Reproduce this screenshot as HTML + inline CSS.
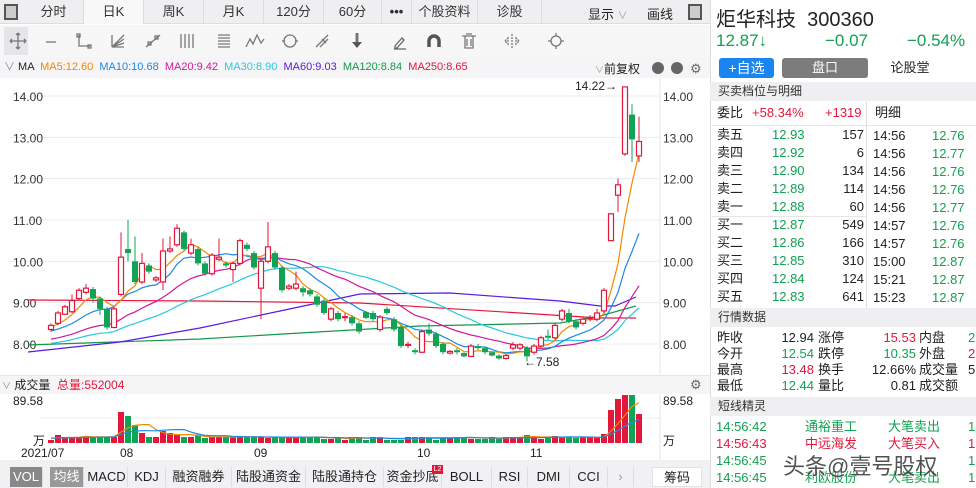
<!DOCTYPE html>
<html><head><meta charset="utf-8">
<style>
*{margin:0;padding:0;box-sizing:border-box}
body{width:976px;height:488px;overflow:hidden;background:#fff;font-family:"Liberation Sans","Noto Sans CJK SC",sans-serif;color:#222;position:relative}
.a{position:absolute;white-space:nowrap}
.g{color:#12a150}.r{color:#e3173a}
.tab{position:absolute;top:0;height:24px;line-height:24px;font-size:13px;text-align:center;color:#333;border-right:1px solid #dcdcdc}
.hdr{position:absolute;left:710px;width:266px;background:#efeff1;font-size:12px;color:#333;padding-left:8px}
.rw{position:absolute;font-size:13px;height:18px;line-height:18px}
.bt{position:absolute;top:467px;height:20px;line-height:20px;font-size:13px;text-align:center;color:#222;border-right:1px solid #ddd}
</style></head><body>
<div class="a" style="left:0;top:0;width:710px;height:24px;background:#efeff1;border-bottom:1px solid #ddd"></div>
<div class="a" style="left:4px;top:4px;width:14px;height:16px;border:2px solid #555;background:#ccc"></div>
<div class="tab" style="left:24px;width:60px">分时</div>
<div class="tab" style="left:84px;width:60px;background:#f8f8f8">日K</div>
<div class="tab" style="left:144px;width:60px">周K</div>
<div class="tab" style="left:204px;width:60px">月K</div>
<div class="tab" style="left:264px;width:60px">120分</div>
<div class="tab" style="left:324px;width:58px">60分</div>
<div class="tab" style="left:382px;width:30px;font-weight:bold">•••</div>
<div class="tab" style="left:412px;width:66px">个股资料</div>
<div class="tab" style="left:478px;width:64px">诊股</div>
<div class="a" style="left:588px;top:4px;font-size:13px">显示 <span style="color:#999;font-size:10px">∨</span></div>
<div class="a" style="left:647px;top:4px;font-size:13px">画线</div>
<div class="a" style="left:688px;top:4px;width:14px;height:16px;border:2px solid #555;background:#ccc"></div>
<div class="a" style="left:0;top:25px;width:710px;height:32px;background:#f7f7f8"></div>
<svg class="a" style="left:0;top:25px" width="710" height="32" stroke="#777" fill="none" stroke-width="1.3">
<rect x="4" y="2" width="24" height="28" fill="#e6e6ea" stroke="none"/>
<path d="M18 8v16M10 16h16M18 8l-2 2M18 8l2 2M18 24l-2-2M18 24l2-2M10 16l2-2M10 16l2 2M26 16l-2-2M26 16l-2 2"/>
<path d="M46 17h10"/><path d="M79 10v11h11" /><rect x="77" y="9" width="3" height="3"/><rect x="88" y="20" width="3" height="3"/>
<path d="M112 22l12-12M112 22l12-8M112 22l12-4M112 22l12 0M112 10v12"/>
<path d="M146 22l14-12"/><rect x="148" y="17" width="3" height="3"/><rect x="155" y="11" width="3" height="3"/>
<path d="M181 9v14M185 9v14M189 9v14M193 9v14"/>
<path d="M218 10h12M218 13h12M218 16h12M218 19h12M218 22h12"/>
<path d="M246 22l4-8 3 5 4-9 4 8 3-4"/>
<circle cx="290" cy="16" r="6"/><path d="M282 16h3M295 16h3"/>
<path d="M316 22l12-12M320 22l8-8M322 14l4 4"/>
<path d="M357 8v10" stroke-width="3"/><path d="M352 17l5 6 5-6z" fill="#555" stroke="none"/>
<path d="M395 21l7-8 2 2-7 8h-2zM394 24h12" stroke="#666"/>
<path d="M429 22v-6a5 5 0 0 1 10 0v6" stroke-width="3.5" stroke="#555"/>
<path d="M462 11h14M465 11v12h8v-12M467 14v7M471 14v7M466 9h6"/>
<path d="M512 9v14M505 16l3-3v6zM519 16l-3-3v6z" stroke-dasharray="2 1"/>
<circle cx="556" cy="16" r="5"/><path d="M556 8v3M556 21v3M548 16h3M561 16h3"/>
</svg>
<div class="a" style="left:0;top:57px;width:710px;height:21px;background:#f5f5f7;font-size:11px;line-height:21px;padding-left:4px">
<span style="color:#888">∨</span> MA &nbsp;<span style="color:#f08a00">MA5:12.60</span>&nbsp; <span style="color:#1e88e5">MA10:10.68</span>&nbsp; <span style="color:#d0189a">MA20:9.42</span>&nbsp; <span style="color:#28c8e0">MA30:8.90</span>&nbsp; <span style="color:#5a1ae0">MA60:9.03</span>&nbsp; <span style="color:#129a4a">MA120:8.84</span>&nbsp; <span style="color:#e3173a">MA250:8.65</span></div>
<div class="a" style="left:595px;top:60px;font-size:12px"><span style="color:#999;font-size:9px">∨</span>前复权</div>
<div class="a" style="left:652px;top:62px;width:12px;height:12px;border-radius:6px;background:#666"></div>
<div class="a" style="left:671px;top:62px;width:12px;height:12px;border-radius:6px;background:#666"></div>
<div class="a" style="left:690px;top:61px;font-size:13px;color:#666">⚙</div>
<svg id="ch" class="a" style="left:0;top:78px" width="710" height="410"></svg>
<div class="a" style="left:0;top:375px;width:710px;height:19px;background:#f5f5f7;border-top:1px solid #e6e6e6;font-size:12px;line-height:19px;padding-left:2px"><span style="color:#888;font-size:9px">∨</span> 成交量 &nbsp;<span class="r">总量:552004</span></div>
<div class="a" style="left:690px;top:377px;font-size:13px;color:#666">⚙</div>
<div class="a" style="left:0;top:460px;width:710px;height:28px;background:#f1f1f3"></div>
<div class="bt" style="left:10px;width:33px;background:#888;color:#fff">VOL</div>
<div class="bt" style="left:50px;width:34px;background:#999;color:#fff">均线</div>
<div class="bt" style="left:86px;width:42px">MACD</div>
<div class="bt" style="left:128px;width:38px">KDJ</div>
<div class="bt" style="left:166px;width:66px">融资融券</div>
<div class="bt" style="left:232px;width:74px">陆股通资金</div>
<div class="bt" style="left:306px;width:78px">陆股通持仓</div>
<div class="bt" style="left:384px;width:58px">资金抄底</div>
<div class="a" style="left:432px;top:465px;width:11px;height:9px;background:#e3173a;color:#fff;font-size:7px;line-height:9px;text-align:center">L2</div>
<div class="bt" style="left:442px;width:50px">BOLL</div>
<div class="bt" style="left:492px;width:36px">RSI</div>
<div class="bt" style="left:528px;width:42px">DMI</div>
<div class="bt" style="left:570px;width:38px">CCI</div>
<div class="bt" style="left:608px;width:26px;color:#999">›</div>
<div class="a" style="left:652px;top:467px;width:50px;height:20px;line-height:20px;background:#fff;font-size:13px;text-align:center;border:1px solid #e4e4e4">筹码</div>
<div class="a" style="left:710px;top:0;width:1px;height:488px;background:#ddd"></div>
<div class="a" style="left:716px;top:3px;font-size:20px;color:#222">炬华科技&nbsp; 300360</div>
<div class="a g" style="left:716px;top:31px;font-size:17px">12.87↓</div>
<div class="a g" style="left:825px;top:31px;font-size:17px">−0.07</div>
<div class="a g" style="left:907px;top:31px;font-size:17px">−0.54%</div>
<div class="a" style="left:719px;top:58px;width:55px;height:20px;background:#1a84f0;border-radius:3px;color:#fff;font-size:14px;text-align:center;line-height:20px">+自选</div>
<div class="a" style="left:782px;top:58px;width:170px;height:20px;background:#f2f2f2;border-radius:3px"></div>
<div class="a" style="left:782px;top:58px;width:86px;height:20px;background:#7c7c7c;border-radius:3px;color:#fff;font-size:13px;text-align:center;line-height:20px">盘口</div>
<div class="a" style="left:868px;top:58px;width:84px;height:20px;background:#fff;font-size:13px;text-align:center;line-height:20px">论股堂</div>
<div class="hdr" style="top:82px;height:19px;line-height:19px">买卖档位与明细</div>
<div class="rw" style="left:717px;top:104px">委比</div>
<div class="rw r" style="left:752px;top:104px">+58.34%</div>
<div class="rw r" style="left:825px;top:104px">+1319</div>
<div class="rw" style="left:875px;top:104px">明细</div>
<div class="a" style="left:866px;top:102px;width:1px;height:208px;background:#ddd"></div>
<div class="a" style="left:710px;top:125px;width:266px;height:1px;background:#e6e6e6"></div>
<div class="a" style="left:710px;top:216px;width:156px;height:1px;background:#e6e6e6"></div>
<div id="ob"></div>
<div class="hdr" style="top:308px;height:19px;line-height:19px">行情数据</div>
<div id="qd"></div>
<div class="hdr" style="top:397px;height:19px;line-height:19px">短线精灵</div>
<div id="sj"></div>
<div class="a" style="left:783px;top:449px;font-size:22px;color:#333;opacity:.85;text-shadow:0 0 2px #fff">头条@壹号股权</div>
<script>
var svg=document.getElementById('ch'),h='';
function Y(p){return 96+(14-p)*41.33-78}
[14,13,12,11,10,9,8].forEach(function(p){var y=Y(p);h+='<line x1="10" x2="660" y1="'+y+'" y2="'+y+'" stroke="#ececec"/>';h+='<text x="13" y="'+(y+5)+'" font-size="12" fill="#333">'+p.toFixed(2)+'</text><text x="663" y="'+(y+5)+'" font-size="12" fill="#333">'+p.toFixed(2)+'</text>';});
h+='<line x1="660" x2="660" y1="0" y2="382" stroke="#e6e6e6"/>';
var C=[[8.35,8.45,8.5,8.3],[8.5,8.75,8.8,8.45],[8.72,8.9,8.95,8.7],[8.78,9.05,9.2,8.75],[9.1,9.3,9.35,9.05],[9.25,9.35,9.45,9.2],[9.33,9.1,9.38,9.0],[9.1,8.85,9.15,8.7],[8.85,8.4,8.9,8.35],[8.4,8.85,8.9,8.38],[9.2,10.1,10.7,9.15],[10.3,10.2,11.0,10.0],[10.0,9.5,10.6,9.45],[9.5,9.95,10.2,9.45],[9.9,9.75,9.95,9.7],[9.55,9.6,9.65,9.5],[9.5,10.25,10.55,9.3],[10.25,10.3,10.6,10.2],[10.4,10.8,10.9,10.35],[10.7,10.3,10.75,10.25],[10.2,10.4,10.55,10.15],[10.3,9.95,10.35,9.9],[9.95,9.7,10.0,9.65],[9.7,10.15,10.2,9.65],[10.05,10.1,10.55,10.0],[9.95,9.9,10.0,9.85],[9.8,9.95,10.0,9.5],[9.95,10.5,10.55,9.9],[10.4,10.3,10.45,10.25],[10.2,9.85,10.25,9.8],[9.35,10.0,10.05,8.6],[10.0,10.35,10.95,9.95],[10.2,9.85,10.25,9.8],[9.85,9.3,9.9,9.25],[9.35,9.4,9.45,9.3],[9.35,9.45,9.75,9.3],[9.35,9.25,9.4,9.15],[9.3,9.2,9.35,9.15],[9.15,8.95,9.2,8.9],[9.05,8.75,9.1,8.7],[8.6,8.85,8.9,8.55],[8.75,8.6,8.8,8.55],[8.64,8.66,8.75,8.55],[8.65,8.5,8.7,8.45],[8.5,8.3,8.55,8.25],[8.77,8.63,8.8,8.6],[8.75,8.6,8.8,8.55],[8.35,8.65,8.7,8.3],[8.85,8.75,8.9,8.7],[8.6,8.35,8.65,8.3],[8.4,7.95,8.45,7.9],[7.97,7.99,8.05,7.9],[7.85,7.8,7.9,7.75],[7.8,8.3,8.35,7.78],[8.35,8.25,8.5,8.2],[8.25,7.95,8.3,7.9],[8.0,7.8,8.05,7.75],[7.78,7.82,7.85,7.75],[7.85,7.8,7.9,7.75],[7.78,7.7,7.8,7.68],[7.7,7.95,8.0,7.68],[7.95,7.9,8.0,7.85],[7.9,7.8,7.92,7.75],[7.8,7.72,7.82,7.7],[7.72,7.65,7.75,7.62],[7.65,7.72,7.75,7.62],[7.9,7.98,8.05,7.85],[7.9,7.98,8.02,7.85],[7.9,7.7,7.95,7.58],[7.8,7.95,8.0,7.75],[7.95,8.15,8.2,7.9],[8.2,8.15,8.35,8.1],[8.15,8.45,8.5,8.1],[8.6,8.8,8.85,8.55],[8.75,8.55,8.85,8.5],[8.55,8.4,8.6,8.35],[8.5,8.6,8.65,8.45],[8.62,8.64,8.7,8.55],[8.6,8.75,8.85,8.55],[8.8,9.3,9.35,8.75],[10.5,11.15,11.15,10.5],[11.6,11.85,12.0,11.2],[12.6,14.22,14.22,12.55],[13.55,12.95,13.8,12.4],[12.55,12.9,13.5,12.4]];
var n=C.length,X=function(i){return 51+i*7};
var G='#10a355',R='#e3173a';
function pl(pts,col){h+='<polyline fill="none" stroke="'+col+'" stroke-width="1.2" points="'+pts+'"/>'}
pl('28,222 200,223 360,225 600,240 636,240',R);
pl('28,267 200,261 300,255 420,248 560,245 600,238 636,228','#129a4a');
pl('28,274 120,264 200,250 280,233 360,216 450,215 560,223 600,228 615,228 636,219','#5a1ae0');
var cl=C.map(function(c){return c[1]});
function ma(k,col,pad){var pts=[];for(var i=0;i<n;i++){var s=0;for(var j=i-k+1;j<=i;j++)s+=(j<0?pad:cl[j]);pts.push(X(i)+','+Y(s/k).toFixed(1));}pl(pts.join(' '),col)}
ma(30,'#28c8e0',8.0);ma(20,'#d0189a',8.1);ma(10,'#1e88e5',8.3);ma(5,'#f08a00',8.4);
C.forEach(function(c,i){var x=X(i),o=c[0],cc=c[1],up=cc>=o,col=up?R:G;var t=Y(Math.max(o,cc)),b=Y(Math.min(o,cc));if(b-t<1)b=t+1;
h+='<line x1="'+x+'" x2="'+x+'" y1="'+Y(c[2])+'" y2="'+t+'" stroke="'+col+'"/><line x1="'+x+'" x2="'+x+'" y1="'+b+'" y2="'+Y(c[3])+'" stroke="'+col+'"/>';
if(up)h+='<rect x="'+(x-2.5)+'" y="'+t+'" width="5" height="'+(b-t)+'" fill="#fff" stroke="'+col+'" stroke-width="1.2"/>';
else h+='<rect x="'+(x-3)+'" y="'+t+'" width="6" height="'+(b-t)+'" fill="'+col+'"/>';});
h+='<text x="575" y="12" font-size="12" fill="#222">14.22→</text><text x="524" y="288" font-size="12" fill="#222">←7.58</text>';
var base=365,V=[];for(var i=0;i<n;i++)V.push(6);
var vv={0:3,1:8,2:6,3:6,5:7,8:6,9:6,10:31,11:27,12:18,13:10,14:6,15:6,16:12,17:10,18:8,20:6,21:8,22:5,26:6,27:7,28:6,29:6,30:6,31:5,33:5,39:4,40:4,48:3,49:3,50:3,60:4,61:4,62:4,64:4,66:6,70:4,73:6,78:5,79:9,80:33,81:44,82:48,83:48,84:29};
for(var k in vv)V[k]=vv[k];
V[68]=8;V[69]=6;V[71]=6;V[72]=7;V[75]=5;V[42]=3;V[45]=3;V[55]=3;
h+='<line x1="40" x2="660" y1="'+(base-50)+'" y2="'+(base-50)+'" stroke="#eee"/><line x1="40" x2="660" y1="'+(base-25)+'" y2="'+(base-25)+'" stroke="#eee"/>';
C.forEach(function(c,i){var col=c[1]>=c[0]?R:G;h+='<rect x="'+(X(i)-3)+'" y="'+(base-V[i])+'" width="6" height="'+V[i]+'" fill="'+col+'"/>'});
function vma(k,col){var p=[];for(var i=0;i<n;i++){var s=0;for(var j=i-k+1;j<=i;j++)s+=(j<0?5:V[j]);p.push(X(i)+','+(base-s/k).toFixed(1))}pl(p.join(' '),col)}
vma(5,'#f08a00');vma(10,'#1e88e5');
h+='<text x="13" y="'+(base-38)+'" font-size="12" fill="#222">89.58</text><text x="663" y="'+(base-38)+'" font-size="12" fill="#222">89.58</text>';
h+='<text x="33" y="'+(base+2)+'" font-size="12" fill="#222">万</text><text x="663" y="'+(base+2)+'" font-size="12" fill="#222">万</text>';
h+='<text x="21" y="'+(base+14)+'" font-size="12" fill="#222">2021/07</text><text x="120" y="'+(base+14)+'" font-size="12" fill="#222">08</text><text x="254" y="'+(base+14)+'" font-size="12" fill="#222">09</text><text x="417" y="'+(base+14)+'" font-size="12" fill="#222">10</text><text x="530" y="'+(base+14)+'" font-size="12" fill="#222">11</text>';
h+='<line x1="660" x2="660" y1="313" y2="385" stroke="#e6e6e6"/>';
svg.innerHTML=h;
var ob=[['卖五','12.93','157','14:56','12.76'],['卖四','12.92','6','14:56','12.77'],['卖三','12.90','134','14:56','12.76'],['卖二','12.89','114','14:56','12.76'],['卖一','12.88','60','14:56','12.77'],['买一','12.87','549','14:57','12.76'],['买二','12.86','166','14:57','12.76'],['买三','12.85','310','15:00','12.87'],['买四','12.84','124','15:21','12.87'],['买五','12.83','641','15:23','12.87']],s='';
ob.forEach(function(r,i){var t=126+i*18;s+='<div class="rw" style="left:717px;top:'+t+'px">'+r[0]+'</div><div class="rw g" style="left:772px;top:'+t+'px">'+r[1]+'</div><div class="rw" style="left:820px;top:'+t+'px;width:44px;text-align:right">'+r[2]+'</div><div class="rw" style="left:873px;top:'+(t+1)+'px">'+r[3]+'</div><div class="rw g" style="left:932px;top:'+(t+1)+'px">'+r[4]+'</div>'});
document.getElementById('ob').innerHTML=s;
var q=[['昨收','12.94','','涨停','15.53','r','内盘','2','g'],['今开','12.54','g','跌停','10.35','g','外盘','2','r'],['最高','13.48','r','换手','12.66%','','成交量','5',''],['最低','12.44','g','量比','0.81','','成交额','','']];s='';
q.forEach(function(r,i){var t=329+i*16;s+='<div class="rw" style="left:717px;top:'+t+'px">'+r[0]+'</div><div class="rw '+r[2]+'" style="left:760px;top:'+t+'px;width:54px;text-align:right">'+r[1]+'</div><div class="rw" style="left:818px;top:'+t+'px">'+r[3]+'</div><div class="rw '+r[5]+'" style="left:860px;top:'+t+'px;width:56px;text-align:right">'+r[4]+'</div><div class="rw" style="left:919px;top:'+t+'px">'+r[6]+'</div><div class="rw '+r[8]+'" style="left:968px;top:'+t+'px">'+r[7]+'</div>'});
document.getElementById('qd').innerHTML=s;
var sj=[['14:56:42','通裕重工','大笔卖出','g'],['14:56:43','中远海发','大笔买入','r'],['14:56:45','','','g'],['14:56:45','利欧股份','大笔卖出','g']];s='';
sj.forEach(function(r,i){var t=418+i*17;s+='<div class="rw '+r[3]+'" style="left:716px;top:'+t+'px">'+r[0]+'</div><div class="rw '+r[3]+'" style="left:805px;top:'+t+'px">'+r[1]+'</div><div class="rw '+r[3]+'" style="left:888px;top:'+t+'px">'+r[2]+'</div><div class="rw '+r[3]+'" style="left:968px;top:'+t+'px">1</div>'});
document.getElementById('sj').innerHTML=s;
</script>
</body></html>
